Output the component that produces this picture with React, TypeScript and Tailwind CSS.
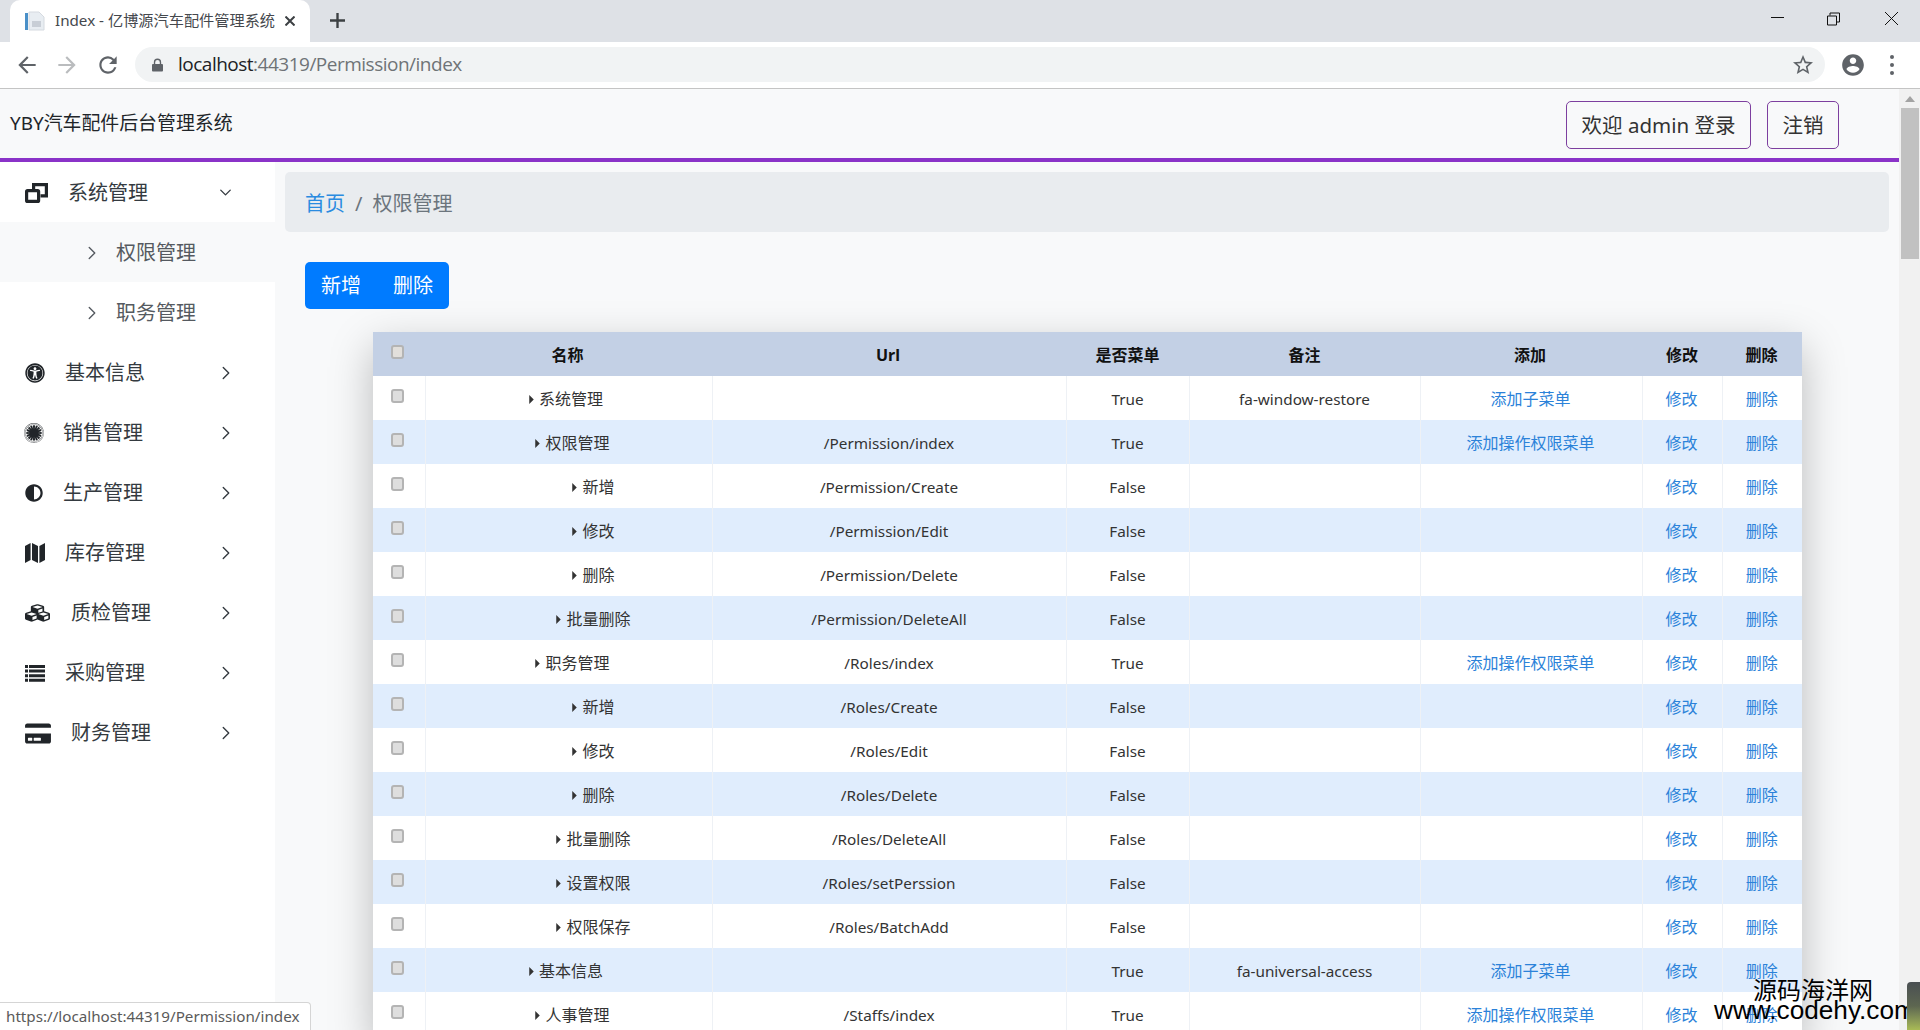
import React from "react";
import { ChevronRight, ChevronDown } from "lucide-react";
import { FaUniversalAccess, FaFirstOrderAlt, FaAdjust, FaCubes, FaCreditCard } from "react-icons/fa";

const Mat = ({ d, className }: { d: string; className: string }) => (
  <svg viewBox="0 0 24 24" className={className} fill="currentColor"><path d={d} /></svg>
);

const RestoreIcon = () => (
  <svg viewBox="0 0 23 20" className="w-[23px] h-[20px] mr-[20px] text-[#212529]" fill="none" stroke="currentColor" strokeWidth="3.2">
    <rect x="1.6" y="7.6" width="12" height="10.8" rx="1" />
    <path d="M8.6 6V1.6h12.8v11.2H15.5" />
  </svg>
);
const MapIcon = () => (
  <svg viewBox="0 0 20 20" className="w-[20px] h-[20px] mr-[20px] text-[#212529]" fill="currentColor">
    <path d="M0 3L5.6 0v17L0 20zM7 0l6 3v17l-6-3zM14.4 3L20 0v17l-5.6 3z" />
  </svg>
);
const ListIcon = () => (
  <svg viewBox="0 0 20 17" className="w-[20px] h-[17px] mr-[20px] text-[#212529]" fill="currentColor">
    <path d="M0 0h3v3H0zM4 0h16v3H4zM0 4.6h3v3H0zM4 4.6h16v3H4zM0 9.2h3v3H0zM4 9.2h16v3H4zM0 13.8h3v3H0zM4 13.8h16v3H4z" />
  </svg>
);

const sideItems = [
  { label: "基本信息", icon: <FaUniversalAccess className="w-[20px] h-[20px] mr-[20px] text-[#212529]" /> },
  { label: "销售管理", icon: <FaFirstOrderAlt className="w-[18px] h-[20px] mr-[20px] text-[#212529] scale-110" /> },
  { label: "生产管理", icon: <FaAdjust className="w-[18px] h-[18px] mr-[20px] text-[#212529]" /> },
  { label: "库存管理", icon: <MapIcon /> },
  { label: "质检管理", icon: <FaCubes preserveAspectRatio="none" className="w-[25px] h-[20px] mr-[21px] text-[#212529]" /> },
  { label: "采购管理", icon: <ListIcon /> },
  { label: "财务管理", icon: <FaCreditCard className="w-[26px] h-[23px] mr-[20px] text-[#212529]" /> },
];

type Row = { name: string; level: 0 | 1 | 2; url: string; menu: string; note: string; add: string };
const ADD_SUB = "添加子菜单";
const ADD_OP = "添加操作权限菜单";
const rows: Row[] = [
  { name: "系统管理", level: 0, url: "", menu: "True", note: "fa-window-restore", add: ADD_SUB },
  { name: "权限管理", level: 1, url: "/Permission/index", menu: "True", note: "", add: ADD_OP },
  { name: "新增", level: 2, url: "/Permission/Create", menu: "False", note: "", add: "" },
  { name: "修改", level: 2, url: "/Permission/Edit", menu: "False", note: "", add: "" },
  { name: "删除", level: 2, url: "/Permission/Delete", menu: "False", note: "", add: "" },
  { name: "批量删除", level: 2, url: "/Permission/DeleteAll", menu: "False", note: "", add: "" },
  { name: "职务管理", level: 1, url: "/Roles/index", menu: "True", note: "", add: ADD_OP },
  { name: "新增", level: 2, url: "/Roles/Create", menu: "False", note: "", add: "" },
  { name: "修改", level: 2, url: "/Roles/Edit", menu: "False", note: "", add: "" },
  { name: "删除", level: 2, url: "/Roles/Delete", menu: "False", note: "", add: "" },
  { name: "批量删除", level: 2, url: "/Roles/DeleteAll", menu: "False", note: "", add: "" },
  { name: "设置权限", level: 2, url: "/Roles/setPerssion", menu: "False", note: "", add: "" },
  { name: "权限保存", level: 2, url: "/Roles/BatchAdd", menu: "False", note: "", add: "" },
  { name: "基本信息", level: 0, url: "", menu: "True", note: "fa-universal-access", add: ADD_SUB },
  { name: "人事管理", level: 1, url: "/Staffs/index", menu: "True", note: "", add: ADD_OP },
];

const Check = ({ head }: { head?: boolean }) => (
  <input
    type="checkbox"
    className={
      "appearance-none block ml-[18px] w-[13px] h-[14px] -translate-y-[2px] rounded-[3px] border-2 border-[#b4b4b4] " +
      (head ? "bg-[#e2dfdb]" : "bg-[#dedede]")
    }
  />
);

const linkCls = "text-[#2b82d9] pt-[2px] pr-[1px]";
const latinCls = "text-[15.3px] pt-[2px]";

export default function App() {
  return (
    <div className="relative w-[1920px] h-[1030px] overflow-hidden flex flex-col bg-white text-[#212529] font-['Noto_Sans','Noto_Sans_CJK_SC',sans-serif]">
      {/* tab strip */}
      <div className="h-[42px] shrink-0 bg-[#dee1e6] flex items-end pl-[10px]">
        <div className="w-[300px] h-[42px] bg-white rounded-t-[10px] flex items-center pl-[15px] pr-[15px]">
          <svg viewBox="0 0 20 20" className="w-[20px] h-[20px] shrink-0">
            <rect x="0" y="2" width="3" height="17" fill="#4a90c8" />
            <path d="M4 1h10l5 5v13H4z" fill="#e8edf2" stroke="#d5dae0" />
            <rect x="7" y="10" width="9" height="6" fill="#c8ced6" />
          </svg>
          <span className="ml-[10px] text-[15.2px] text-[#45484d] whitespace-nowrap leading-none">Index - 亿博源汽车配件管理系统</span>
          <svg viewBox="0 0 10 10" className="ml-auto w-[10px] h-[10px] text-[#3c4043]" stroke="currentColor" strokeWidth="2"><path d="M0.5 .5l9 9M9.5 .5l-9 9" /></svg>
        </div>
        <svg viewBox="0 0 14 14" className="ml-[20px] mb-[14px] w-[15px] h-[15px] text-[#3c4043]" stroke="currentColor" strokeWidth="2.2"><path d="M7 0v14M0 7h14" /></svg>
        <div className="ml-auto h-full flex items-start text-[#111]">
          <svg viewBox="0 0 13 13" className="mt-[12px] w-[13px] h-[13px]" stroke="currentColor" fill="none"><path d="M0 5.5h13" /></svg>
          <svg viewBox="0 0 13 13" className="ml-[43px] mt-[12px] w-[13px] h-[14px]" stroke="currentColor" fill="none"><path d="M.5 3.5h9v9h-9zM3 3V.5h9.5v9H10" /></svg>
          <svg viewBox="0 0 13 13" className="ml-[45px] mr-[22px] mt-[12px] w-[13px] h-[13px]" stroke="currentColor" fill="none"><path d="M0 0l13 13M13 0L0 13" /></svg>
        </div>
      </div>
      {/* toolbar */}
      <div className="h-[47px] shrink-0 bg-white border-b border-[#c4c4c4] flex items-center">
        <Mat className="ml-[14px] w-[26px] h-[26px] text-[#5f6368]" d="M20 11H7.83l5.59-5.59L12 4l-8 8 8 8 1.41-1.41L7.83 13H20v-2z" />
        <Mat className="ml-[14px] w-[26px] h-[26px] text-[#babcbe]" d="M12 4l-1.41 1.41L16.17 11H4v2h12.17l-5.58 5.59L12 20l8-8z" />
        <Mat className="ml-[15px] w-[26px] h-[26px] text-[#5f6368]" d="M17.65 6.35A7.958 7.958 0 0 0 12 4c-4.42 0-7.99 3.58-7.99 8s3.57 8 7.99 8c3.73 0 6.84-2.55 7.73-6h-2.08A5.99 5.99 0 0 1 12 18c-3.31 0-6-2.69-6-6s2.69-6 6-6c1.66 0 3.14.69 4.22 1.78L13 11h7V4l-2.35 2.35z" />
        <div className="ml-[14px] w-[1690px] h-[35px] rounded-full bg-[#f1f3f4] flex items-center pl-[17px] pr-[10px] -mt-[1px]">
          <svg viewBox="0 0 12 14" className="w-[11px] h-[14px] text-[#5f6368]" fill="currentColor"><path d="M2 6V4a4 4 0 0 1 8 0v2h1a1 1 0 0 1 1 1v6a1 1 0 0 1-1 1H1a1 1 0 0 1-1-1V7a1 1 0 0 1 1-1zm1.5 0h5V4a2.5 2.5 0 0 0-5 0z" /></svg>
          <span className="ml-[15px] text-[19px] leading-none whitespace-nowrap font-['Open_Sans',sans-serif] tracking-[-0.5px] text-[#202124]">localhost<span className="text-[#6f7377]">:44319/Permission/index</span></span>
          <Mat className="ml-auto w-[24px] h-[24px] text-[#5f6368]" d="M22 9.24l-7.19-.62L12 2 9.19 8.63 2 9.24l5.46 4.73L5.82 21 12 17.27 18.18 21l-1.63-7.03L22 9.24zM12 15.4l-3.76 2.27 1-4.28-3.32-2.88 4.38-.38L12 6.1l1.71 4.04 4.38.38-3.32 2.88 1 4.28L12 15.4z" />
        </div>
        <Mat className="ml-[15px] w-[26px] h-[26px] text-[#5f6368]" d="M12 2C6.48 2 2 6.48 2 12s4.48 10 10 10 10-4.48 10-10S17.52 2 12 2zm0 3c1.66 0 3 1.34 3 3s-1.34 3-3 3-3-1.34-3-3 1.34-3 3-3zm0 14.2c-2.5 0-4.71-1.28-6-3.22.03-1.99 4-3.08 6-3.08 1.99 0 5.97 1.09 6 3.08-1.29 1.94-3.5 3.22-6 3.22z" />
        <div className="ml-[24px] flex flex-col gap-[4px]">
          <div className="w-[4px] h-[4px] rounded-full bg-[#5f6368]" />
          <div className="w-[4px] h-[4px] rounded-full bg-[#5f6368]" />
          <div className="w-[4px] h-[4px] rounded-full bg-[#5f6368]" />
        </div>
      </div>
      {/* page */}
      <div className="flex-1 min-h-0 flex bg-[#f8f9fa]">
        <div className="w-[1899px] flex flex-col min-h-0">
          <header className="h-[73px] shrink-0 border-b-4 border-[#8a33c8] flex items-center justify-between pl-[10px] pr-[60px]">
            <span className="text-[18.9px] text-[#212529] whitespace-nowrap -mt-[1px]">YBY汽车配件后台管理系统</span>
            <div className="flex gap-[16px] mt-[3px]">
              <button className="w-[185px] h-[48px] rounded-[5px] border border-[#7d3f9f] text-[20.5px] text-[#333]">欢迎 admin 登录</button>
              <button className="w-[72px] h-[48px] rounded-[5px] border border-[#7d3f9f] text-[20.5px] text-[#333]">注销</button>
            </div>
          </header>
          <div className="flex-1 min-h-0 flex">
            <aside className="w-[275px] shrink-0 bg-white text-[20px] text-[#343a40]">
              <div className="h-[60px] flex items-center pt-[2px] pl-[25px] pr-[40px]">
                <RestoreIcon />
                <span>系统管理</span>
                <ChevronDown size={19} strokeWidth={1.7} className="ml-auto -mt-[2px]" />
              </div>
              <div className="h-[60px] flex items-center pt-[2px] pl-[81px] bg-[#f8f9fa] text-[#555a60]">
                <ChevronRight size={22} strokeWidth={1.5} className="mr-[13px]" />
                <span>权限管理</span>
              </div>
              <div className="h-[60px] flex items-center pt-[2px] pl-[81px] text-[#555a60]">
                <ChevronRight size={22} strokeWidth={1.5} className="mr-[13px]" />
                <span>职务管理</span>
              </div>
              {sideItems.map(({ label, icon }) => (
                <div key={label} className="h-[60px] flex items-center pt-[2px] pl-[25px] pr-[38px]">
                  {icon}
                  <span>{label}</span>
                  <ChevronRight size={22} strokeWidth={1.5} className="ml-auto" />
                </div>
              ))}
            </aside>
            <main className="flex-1 min-w-0 flex flex-col overflow-hidden">
              <nav className="mt-[10px] mx-[10px] h-[60px] shrink-0 rounded-[5px] bg-[#e9ecef] flex items-center pt-[3px] pl-[20px] text-[20px] text-[#6c757d]">
                <a className="text-[#2a8be0]">首页</a>
                <span className="mx-[10px]">/</span>
                <span>权限管理</span>
              </nav>
              <div className="mt-[30px] ml-[30px] shrink-0 flex w-fit rounded-[5px] bg-[#007bff] text-white text-[20px] h-[47px]">
                <button className="w-[72px] pt-[1px]">新增</button>
                <button className="w-[72px] pt-[1px]">删除</button>
              </div>
              <div className="mt-[23px] ml-[98px] w-[1429px] shrink-0 shadow-[0_15px_40px_rgba(0,0,0,0.25)]">
                <table className="w-[1429px] table-fixed border-collapse text-[16px] text-center text-[#333]">
                  <colgroup>
                    <col className="w-[52px]" />
                    <col className="w-[287px]" />
                    <col className="w-[354px]" />
                    <col className="w-[123px]" />
                    <col className="w-[231px]" />
                    <col className="w-[222px]" />
                    <col className="w-[80px]" />
                    <col className="w-[80px]" />
                  </colgroup>
                  <thead>
                    <tr className="h-[44px] bg-[#c3d0e5] text-[#111]">
                      <th><Check head /></th>
                      <th className="pt-[2px] pr-[2px]">名称</th>
                      <th className="pt-[2px] pr-[2px]">Url</th>
                      <th className="pt-[2px]">是否菜单</th>
                      <th className="pt-[2px]">备注</th>
                      <th className="pt-[2px] pr-[2px]">添加</th>
                      <th className="pt-[2px]">修改</th>
                      <th className="pt-[2px] pr-[1px]">删除</th>
                    </tr>
                  </thead>
                  <tbody>
                    {rows.map((r, i) => (
                      <tr key={i} className={"h-[44px] " + (i % 2 ? "bg-[#e0edfd]" : "bg-white")}>
                        <td className="border-r border-[#eef1f5]"><Check /></td>
                        <td className={"border-r border-[#eef1f5] pt-[1px] " + (r.level === 0 ? "pr-[5px]" : r.level === 1 ? "pl-[8px]" : "pl-[50px]")}>
                          <span className="inline-flex items-center">
                            <svg viewBox="0 0 4 8" className="w-[5px] h-[9px] mr-[5px] text-[#333]" fill="currentColor"><path d="M0 0l4 4-4 4z" /></svg>
                            {r.name}
                          </span>
                        </td>
                        <td className={"border-r border-[#eef1f5] " + latinCls}>{r.url}</td>
                        <td className={"border-r border-[#eef1f5] " + latinCls}>{r.menu}</td>
                        <td className={"border-r border-[#eef1f5] " + latinCls}>{r.note}</td>
                        <td className={"border-r border-[#eef1f5] " + linkCls}>{r.add}</td>
                        <td className={"border-r border-[#eef1f5] " + linkCls}>修改</td>
                        <td className={linkCls}>删除</td>
                      </tr>
                    ))}
                  </tbody>
                </table>
              </div>
            </main>
          </div>
        </div>
        {/* page scrollbar */}
        <div className="w-[21px] shrink-0 bg-[#f1f1f1] flex flex-col items-center">
          <svg viewBox="0 0 10 6" className="mt-[7px] w-[10px] h-[6px] text-[#a3a3a3]" fill="currentColor"><path d="M5 0l5 6H0z" /></svg>
          <div className="mt-[6px] w-[18px] h-[151px] bg-[#c1c1c1]" />
        </div>
      </div>
      {/* link status bubble */}
      <div className="absolute left-0 bottom-0 w-[311px] h-[28px] bg-white border-t border-r border-[#d5d5d5] rounded-tr-[4px] pl-[6px] flex items-center text-[15.2px] text-[#5a5a5a] whitespace-nowrap">https://localhost:44319/Permission/index</div>
      {/* watermark */}
      <div className="absolute left-[1753px] top-[972px] text-[24px] leading-[36px] text-black whitespace-nowrap">源码海洋网</div>
      <div className="absolute left-[1714px] top-[992px] text-[26.2px] leading-[36px] text-black whitespace-nowrap font-['Liberation_Sans',sans-serif]">www.codehy.com</div>
      <div className="absolute left-[1907px] top-[982px] w-[13px] h-[48px] rounded-tl-[4px] bg-gradient-to-b from-[#4a4f52] via-[#5d6650] to-[#a9bb55]" />
    </div>
  );
}
